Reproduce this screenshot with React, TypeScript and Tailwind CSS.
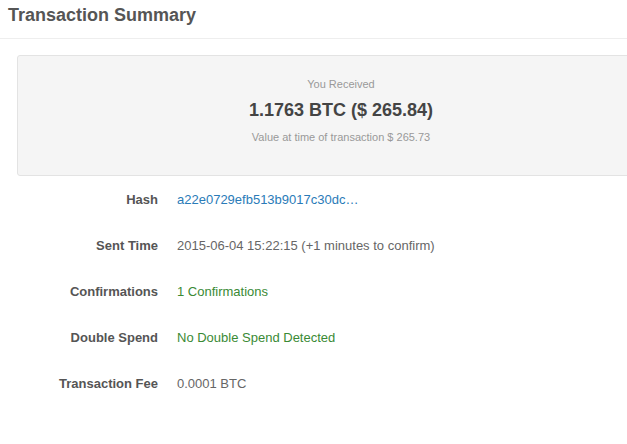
const ROWS: { label: string; value: string; tone?: "link" | "ok" }[] = [
  { label: "Hash", value: "a22e0729efb513b9017c30dc…", tone: "link" },
  { label: "Sent Time", value: "2015-06-04 15:22:15 (+1 minutes to confirm)" },
  { label: "Confirmations", value: "1 Confirmations", tone: "ok" },
  { label: "Double Spend", value: "No Double Spend Detected", tone: "ok" },
  { label: "Transaction Fee", value: "0.0001 BTC" },
];

function valueColor(tone?: "link" | "ok") {
  if (tone === "link") return "text-[#2a7bb8]";
  if (tone === "ok") return "text-[#3a8a35]";
  return "text-[#666]";
}

export default function App() {
  return (
    <div className="min-h-[444px] w-[627px] overflow-hidden bg-white font-['Liberation_Sans',Arial,sans-serif] text-[#555]">
      <div className="border-b border-[#eee] px-2 pt-[5px] pb-[12px]">
        <h1 className="text-[18px] font-bold leading-[21px] text-[#555]">Transaction Summary</h1>
      </div>

      <div className="mt-[16px] ml-[17px] -mr-[38px] rounded-[3px] border border-[#e3e3e3] bg-[#f5f5f5] pt-[21px] pb-[31px] text-center">
        <div className="text-[11px] leading-[14px] text-[#999]">You Received</div>
        <div className="mt-[8px] text-[18px] font-bold leading-[22px] text-[#444]">1.1763 BTC ($ 265.84)</div>
        <div className="mt-[9px] text-[11px] leading-[14px] text-[#999]">Value at time of transaction $ 265.73</div>
      </div>

      <div className="mt-[16px] flex flex-col gap-[30px]">
        {ROWS.map((r) => (
          <div key={r.label} className="flex items-center text-[13px] leading-[16px]">
            <div className="w-[158px] text-right font-bold text-[#555]">{r.label}</div>
            <div className={`ml-[19px] ${valueColor(r.tone)}`}>{r.value}</div>
          </div>
        ))}
      </div>
    </div>
  );
}
